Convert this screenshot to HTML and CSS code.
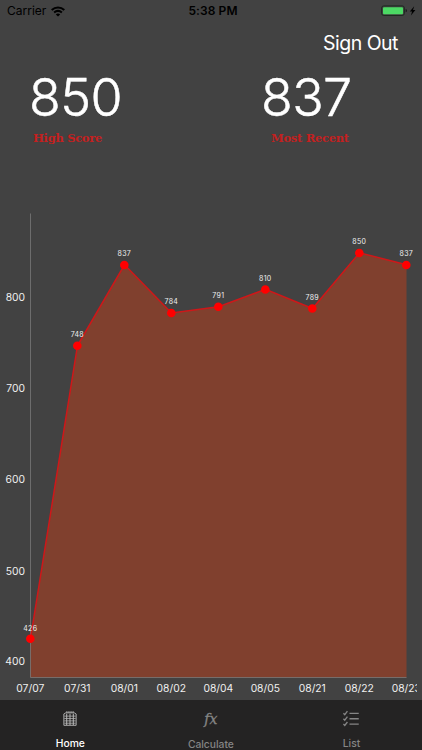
FILE: index.html
```html
<!DOCTYPE html>
<html lang="en">
<head>
    <meta charset="UTF-8">
    <meta name="viewport" content="width=device-width, initial-scale=1.0">
    <title>Scores</title>
    <link rel="stylesheet" href="styles.css">
</head>
<body>

    <div class="status-bar">
        <div class="carrier">
            <span>Carrier</span>
            <svg width="14" height="11" viewBox="0 0 14 11" fill="none" stroke="#000" stroke-width="2">
                <path d="M.7 4C4.3.6 9.7.6 13.3 4"/>
                <path d="M3.1 6.6c2.3-2 5.5-2 7.8 0"/>
                <path d="M7 10.6L4.8 8.4c1.3-1.1 3.1-1.1 4.4 0z" fill="#000" stroke="none"/>
            </svg>
        </div>
        <div class="time">5:38 PM</div>
        <div class="battery">
            <svg width="36" height="12" viewBox="0 0 36 12">
                <rect x=".6" y=".9" width="22.8" height="9.6" rx="2.2" fill="none" stroke="#1d2a20"/>
                <rect x="2" y="2.2" width="20" height="7" rx="1" fill="#4cd964"/>
                <path d="M24.7 4.1q1.2.4 1.2 1.6t-1.2 1.6z" fill="#151515"/>
                <path d="M33.2 1.2L28.8 6.4h2.3L29.9 10.6 34.4 5.1H32z" fill="#000"/>
            </svg>
        </div>
    </div>

    <div class="nav">
        <a class="sign-out">Sign Out</a>
    </div>

    <div class="scores">
        <div class="score high">
            <div class="number">850</div>
            <div class="caption">High Score</div>
        </div>
        <div class="score recent">
            <div class="number">837</div>
            <div class="caption">Most Recent</div>
        </div>
    </div>

    <svg class="chart" width="422" height="500" viewBox="0 200 422 500">
        <clipPath id="chartClip"><rect x="0" y="200" width="417" height="500"/></clipPath>
        <polygon class="area" points="30.5,638.5 77.5,345.5 124.5,264.8 171.5,313 218.5,306.8 265.5,289.3 312.5,308.5 359.5,252.8 406.5,264.8 406.5,677.5 30.5,677.5"/>
        <path class="axis" d="M30.5 213.5V677.5H406.5"/>
        <polyline class="line" points="30.5,638.5 77.5,345.5 124.5,264.8 171.5,313 218.5,306.8 265.5,289.3 312.5,308.5 359.5,252.8 406.5,264.8"/>
        <g class="dots">
            <circle cx="30.3" cy="638.8" r="4.3"/>
            <circle cx="77.3" cy="345.7" r="4.3"/>
            <circle cx="124.3" cy="265" r="4.3"/>
            <circle cx="171.3" cy="313" r="4.3"/>
            <circle cx="218.3" cy="306.8" r="4.3"/>
            <circle cx="265.3" cy="289.5" r="4.3"/>
            <circle cx="312.3" cy="308.5" r="4.3"/>
            <circle cx="359.3" cy="253" r="4.3"/>
            <circle cx="406.3" cy="265" r="4.3"/>
        </g>
        <g class="values">
            <text x="30.3" y="630.6">426</text>
            <text x="77.3" y="337.4">748</text>
            <text x="124.3" y="256.4">837</text>
            <text x="171.3" y="304.4">784</text>
            <text x="218.3" y="298.4">791</text>
            <text x="265.3" y="280.9">810</text>
            <text x="312.3" y="300.1">789</text>
            <text x="359.3" y="244.4">850</text>
            <text x="406.3" y="256.4">837</text>
        </g>
        <g class="y-labels">
            <text x="25" y="301.3">800</text>
            <text x="25" y="392.3">700</text>
            <text x="25" y="483.3">600</text>
            <text x="25" y="574.5">500</text>
            <text x="25" y="665.3">400</text>
        </g>
        <g class="x-labels" clip-path="url(#chartClip)">
            <text x="30.3" y="692">07/07</text>
            <text x="77.3" y="692">07/31</text>
            <text x="124.3" y="692">08/01</text>
            <text x="171.3" y="692">08/02</text>
            <text x="218.3" y="692">08/04</text>
            <text x="265.3" y="692">08/05</text>
            <text x="312.3" y="692">08/21</text>
            <text x="359.3" y="692">08/22</text>
            <text x="406.3" y="692">08/23</text>
        </g>
    </svg>

    <div class="tab-bar">
        <div class="tab active">
            <svg width="16" height="18" viewBox="0 0 16 18" fill="none" stroke="#b4b4b4">
                <path d="M1.5 16.2V4.2L3.5 3h9l2 1.2v12z" stroke-width="1"/>
                <path d="M4.7 3V1.2M6.9 3V1.2M9.1 3V1.2M11.3 3V1.2" stroke-width="1.2"/>
                <path d="M4.5 4v12M8 4v12M11.5 4v12" stroke-width="1.1"/>
                <path d="M2 6.5h12M2 9h12M2 11.5h12M2 14h12" stroke-width=".8"/>
            </svg>
            <span>Home</span>
        </div>
        <div class="tab">
            <div class="fx">fx</div>
            <span>Calculate</span>
        </div>
        <div class="tab">
            <svg width="18" height="18" viewBox="0 0 18 18" fill="none" stroke="#858585" stroke-width="1.4">
                <path d="M7.4 3.5h9.8M7.4 9.3h9.8M7.4 15h9.8"/>
                <path d="M1 3.4l1.4 1.5L5.2 1.2M1 9.2l1.4 1.5L5.2 7M1 14.9l1.4 1.5 2.8-3.7"/>
            </svg>
            <span>List</span>
        </div>
    </div>

</body>
</html>
```
FILE: styles.css
```css
* {
    box-sizing: border-box;
}
body {
    margin: 0;
    width: 422px;
    height: 750px;
    overflow: hidden;
    display: flex;
    flex-direction: column;
    background-color: #424242;
    color: white;
    font-family: Inter, "Liberation Sans", sans-serif;
}
.status-bar {
    height: 22px;
    display: grid;
    grid-template-columns: 1fr auto 1fr;
    align-items: center;
    padding: 0 5px 0 7px;
    color: #000;
    font-size: 12px;
    line-height: 22px;
}
.carrier {
    display: flex;
    align-items: center;
    gap: 5px;
}
.time {
    padding-left: 2px;
    font-weight: 600;
    letter-spacing: 0.1px;
}
.battery {
    display: flex;
    justify-content: flex-end;
}
.nav {
    height: 45px;
    padding: 9px 24px 0 0;
    text-align: right;
}
.sign-out {
    font-size: 19.5px;
    line-height: 25px;
    letter-spacing: -0.5px;
}
.scores {
    height: 133px;
    display: flex;
}
.high {
    width: 232px;
    padding-left: 29px;
}
.recent {
    padding-left: 29px;
}
.number {
    font-size: 52px;
    font-weight: 300;
    line-height: 61px;
    letter-spacing: -0.6px;
    -webkit-text-stroke: 0.5px white;
}
.caption {
    padding-left: 4px;
    color: #c4201f;
    font-family: "DejaVu Serif", serif;
    font-size: 11.5px;
    font-weight: bold;
    line-height: 20px;
    letter-spacing: -0.3px;
}
.recent .caption {
    padding-left: 10px;
}
.chart {
    display: block;
    flex: none;
}
.area {
    fill: #80402e;
}
.axis {
    fill: none;
    stroke: #808080;
    stroke-opacity: 0.7;
}
.line {
    fill: none;
    stroke: #cf1719;
    stroke-width: 1.5;
}
.dots {
    fill: #ff0000;
}
.chart text {
    fill: #f0f0f0;
    text-anchor: middle;
}
.values {
    font-size: 7px;
    letter-spacing: 0.3px;
}
.y-labels,
.x-labels {
    font-size: 10.3px;
}
.chart .y-labels text {
    text-anchor: end;
}
.tab-bar {
    height: 50px;
    display: flex;
    background-color: #242323;
}
.tab {
    width: 140.6px;
    padding-top: 10px;
    display: flex;
    flex-direction: column;
    align-items: center;
    color: #858585;
    font-size: 10.3px;
    font-weight: 500;
}
.tab svg,
.fx {
    height: 18px;
}
.tab span {
    margin-top: 9px;
    line-height: 14px;
}
.active {
    color: #fff;
}
.fx {
    font-family: "DejaVu Serif", serif;
    font-size: 14px;
    font-style: italic;
    line-height: 18px;
    -webkit-text-stroke: 0.3px #858585;
}
```
